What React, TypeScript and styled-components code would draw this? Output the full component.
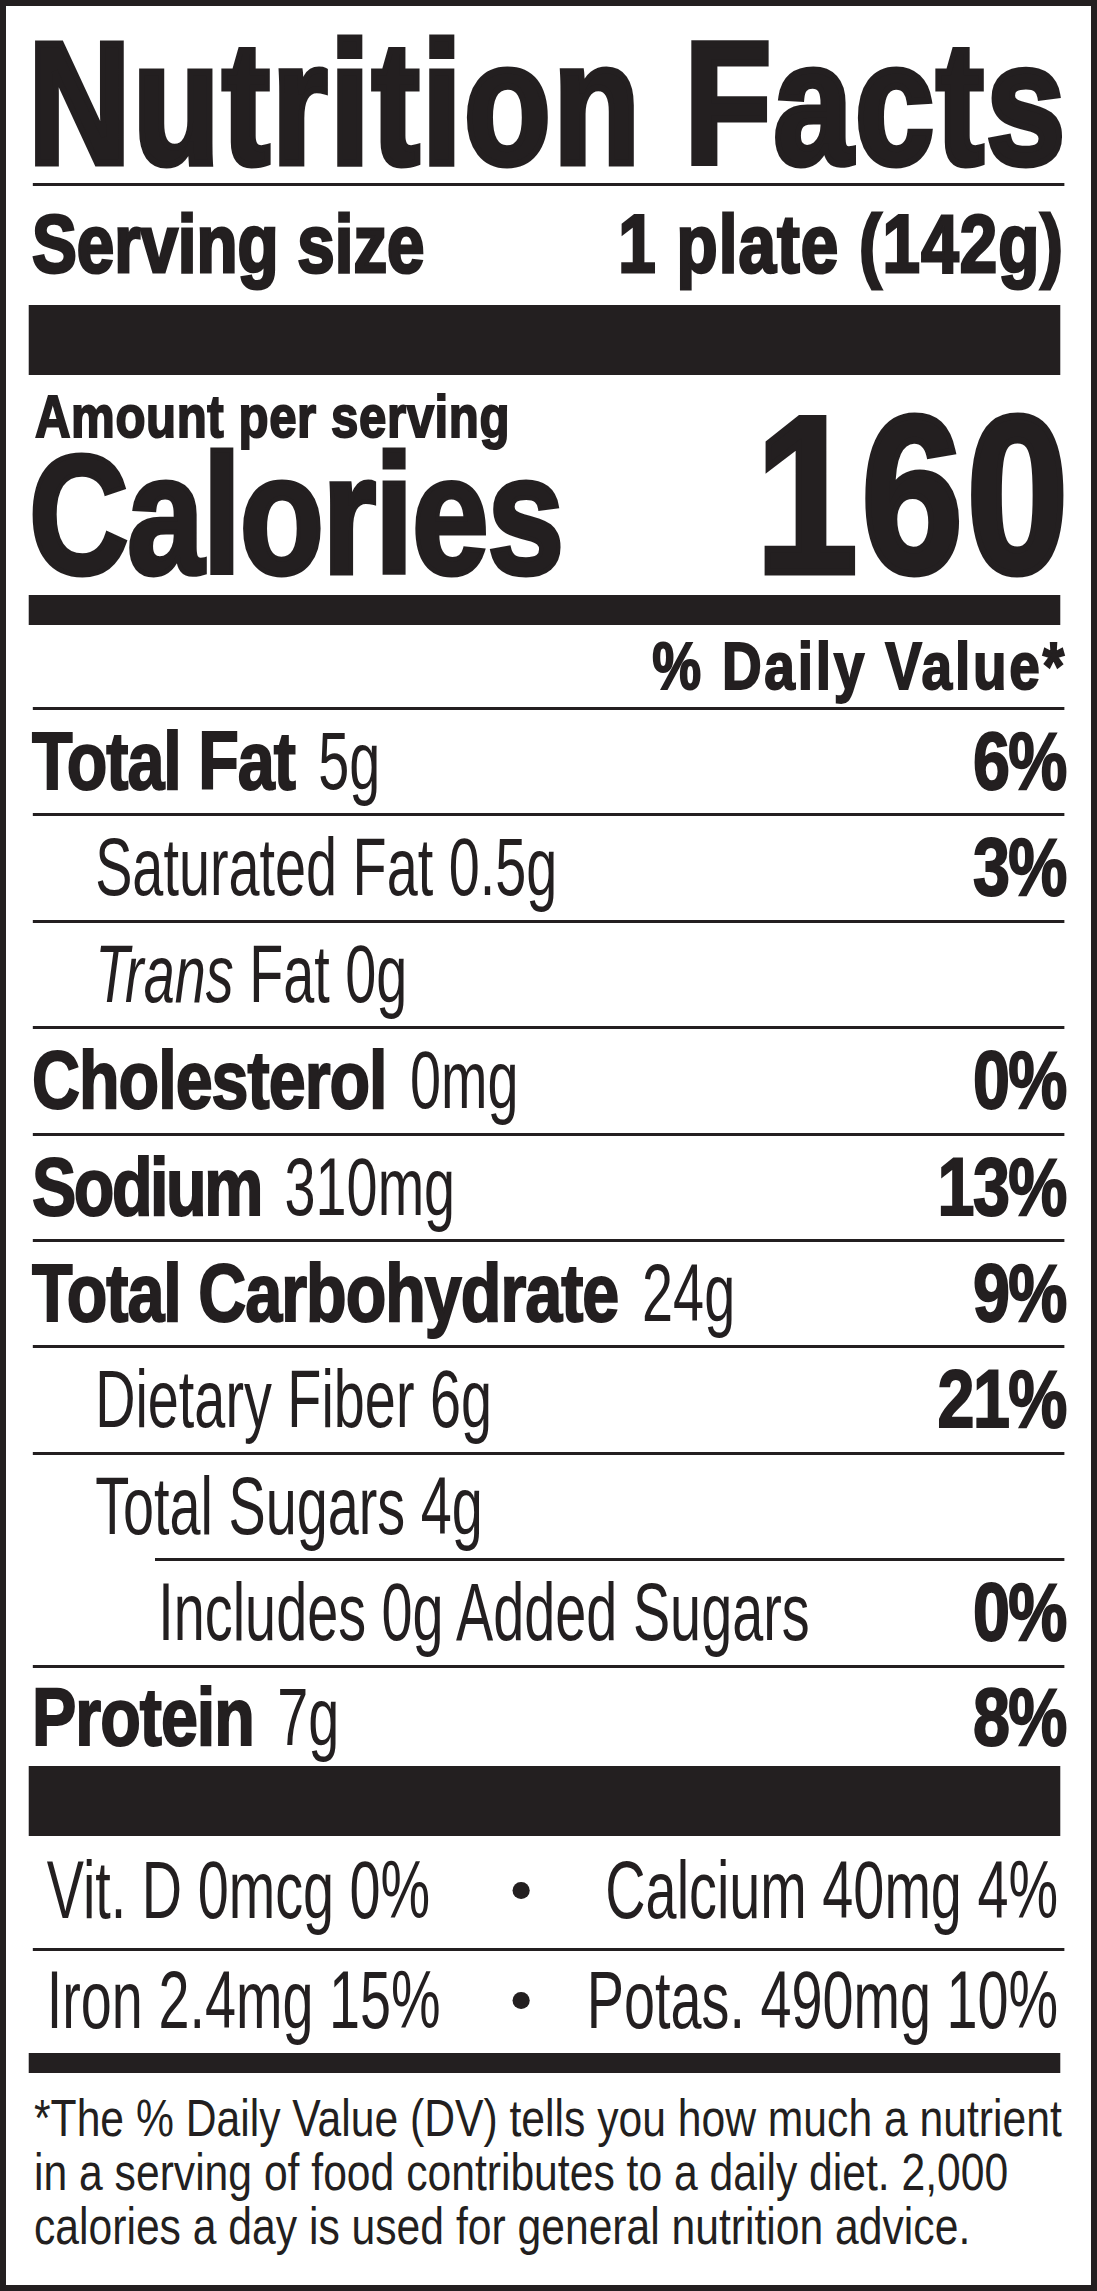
import React from "react";
import styled, { createGlobalStyle, css } from "styled-components";

const INK = "#231f20";
const SQUEEZE = 0.82;
const NARROW = 0.84;
/* convert a visual (on-screen) horizontal distance into panel units */
const sx = (px: number) => `${(px / SQUEEZE).toFixed(2)}px`;

const GlobalStyle = createGlobalStyle`
  html, body { margin: 0; padding: 0; background: #ffffff; }
  body { font-family: "Liberation Sans", Arial, sans-serif; color: ${INK}; }
  * { box-sizing: border-box; }
`;

/* a black-weight grotesque: the bold face, thickened by an outline */
const heavy = (stroke: number) => css`
  font-family: "Liberation Sans", Arial, sans-serif;
  font-weight: 700;
  -webkit-text-stroke: ${stroke}px ${INK};
`;

const regular = css`
  font-family: "Liberation Sans", Arial, sans-serif;
  font-weight: 400;
  -webkit-text-stroke: 0;
`;

const Label = styled.article`
  width: 1097px;
  border: 6px solid ${INK};
  padding-left: 26px;
  overflow: hidden;
  background: #ffffff;
  color: ${INK};
`;

const Panel = styled.div`
  width: ${sx(1032)};
  transform: scaleX(${SQUEEZE});
  transform-origin: left top;
`;

const Title = styled.h1`
  margin: 0 0 0 ${sx(-3.5)};
  padding-top: 18px;
  ${heavy(7)};
  font-size: 172px;
  line-height: 159px;
  letter-spacing: 3.6px;
  white-space: nowrap;
`;

const Rule = styled.div<{ $inset?: number }>`
  height: 3px;
  margin-left: ${(p) => sx(p.$inset ?? 1)};
  background: ${INK};
`;

const Bar = styled.div<{ $h: number }>`
  height: ${(p) => p.$h}px;
  margin: 0 ${sx(4)} 0 ${sx(-3)};
  background: ${INK};
`;

const ServingRow = styled.div`
  display: flex;
  justify-content: space-between;
  align-items: baseline;
  padding-bottom: 4px;
  ${heavy(3)};
  font-size: 82px;
  line-height: 115px;
  white-space: nowrap;
`;

const ServingValue = styled.span`
  letter-spacing: 1.4px;
`;

const CalorieBlock = styled.section`
  display: flex;
  justify-content: space-between;
  align-items: flex-end;
  padding: 4px 0 20px;
  white-space: nowrap;
`;

const CalorieLabels = styled.div`
  display: flex;
  flex-direction: column;
`;

const AmountLine = styled.div`
  margin-left: ${sx(3)};
  ${heavy(2)};
  font-size: 60px;
  line-height: 76px;
  letter-spacing: 0.7px;
`;

const CaloriesLine = styled.div`
  margin-left: ${sx(-3)};
  ${heavy(5)};
  font-size: 168px;
  line-height: 120px;
  letter-spacing: -1.5px;
`;

const CalorieValue = styled.div`
  margin-right: calc(${sx(-4)} - 5px);
  ${heavy(7)};
  font-size: 222px;
  line-height: 160px;
  letter-spacing: 5px;
`;

const DailyHeader = styled.div`
  margin-right: -3.5px;
  ${heavy(2)};
  font-size: 67px;
  line-height: 82px;
  letter-spacing: 3.4px;
  text-align: right;
  white-space: nowrap;
`;

const NutrientRow = styled.div<{ $level: number; $height?: number }>`
  display: flex;
  justify-content: space-between;
  align-items: baseline;
  padding-left: ${(p) => sx([0, 63, 126][p.$level])};
  font-size: 81px;
  line-height: ${(p) => p.$height ?? 103.4}px;
  white-space: nowrap;
`;

const Nutrient = styled.span<{ $tracking?: number }>`
  ${heavy(2)};
  letter-spacing: ${(p) => p.$tracking ?? -1.2}px;
`;

/* the thin condensed face of the label, drawn from the regular face */
const Condensed = styled.span<{ $anchor?: "left" | "right" }>`
  display: inline-block;
  ${regular};
  transform: scaleX(${NARROW});
  transform-origin: ${(p) => (p.$anchor === "right" ? "right" : "left")} center;
`;

const NutrientAmount = styled(Condensed)`
  margin-left: 6px;
`;

const Slanted = styled.em`
  font-style: italic;
`;

const Percent = styled.span`
  ${heavy(2)};
  letter-spacing: -2px;
  margin-right: -2px;
`;

const MicroRow = styled.div<{ $height: number }>`
  display: grid;
  grid-template-columns: ${sx(465.5)} ${sx(17)} minmax(0, 1fr);
  align-items: center;
  padding: 0 ${sx(6)} 4px ${sx(15)};
  font-size: 81px;
  line-height: ${(p) => p.$height}px;
  white-space: nowrap;
`;

const MicroRight = styled(Condensed)`
  justify-self: end;
  margin-left: -240px;
`;

const Dot = styled.span`
  width: ${sx(17)};
  height: 17px;
  border-radius: 50%;
  background: ${INK};
`;

const Footnote = styled.p`
  margin: 0 0 0 ${sx(2)};
  padding: 18px 0 32px;
  ${regular};
  font-size: 52px;
  line-height: 54px;
  letter-spacing: 0px;
  white-space: nowrap;
`;

type NutrientItem = {
  name: string;
  amount: string;
  dv?: string;
  level: 0 | 1 | 2;
  italicPrefix?: string;
  tracking?: number;
};

const nutrients: NutrientItem[] = [
  { name: "Total Fat", amount: "5g", dv: "6%", level: 0 },
  { name: "Saturated Fat", amount: "0.5g", dv: "3%", level: 1 },
  { name: "Fat", italicPrefix: "Trans", amount: "0g", level: 1 },
  { name: "Cholesterol", amount: "0mg", dv: "0%", level: 0 },
  { name: "Sodium", amount: "310mg", dv: "13%", level: 0, tracking: -3 },
  { name: "Total Carbohydrate", amount: "24g", dv: "9%", level: 0 },
  { name: "Dietary Fiber", amount: "6g", dv: "21%", level: 1 },
  { name: "Total Sugars", amount: "4g", level: 1 },
  { name: "Includes 0g Added Sugars", amount: "", dv: "0%", level: 2 },
  { name: "Protein", amount: "7g", dv: "8%", level: 0 },
];

function NutrientLine({ item, height }: { item: NutrientItem; height?: number }) {
  const label =
    item.level === 0 ? (
      <span>
        <Nutrient $tracking={item.tracking}>{item.name}</Nutrient>{" "}
        <NutrientAmount>{item.amount}</NutrientAmount>
      </span>
    ) : (
      <Condensed>
        {item.italicPrefix ? (
          <>
            <Slanted>{item.italicPrefix}</Slanted>{" "}
          </>
        ) : null}
        {item.name}
        {item.amount ? ` ${item.amount}` : ""}
      </Condensed>
    );
  return (
    <NutrientRow $level={item.level} $height={height}>
      {label}
      {item.dv ? <Percent>{item.dv}</Percent> : null}
    </NutrientRow>
  );
}

const micros: [string, string][] = [
  ["Vit. D 0mcg 0%", "Calcium 40mg 4%"],
  ["Iron 2.4mg 15%", "Potas. 490mg 10%"],
];

export default function App() {
  return (
    <>
      <GlobalStyle />
      <Label>
        <Panel>
          <Title>Nutrition Facts</Title>
          <Rule />
          <ServingRow>
            <span>Serving size</span>
            <ServingValue>1 plate (142g)</ServingValue>
          </ServingRow>
          <Bar $h={70} />
          <CalorieBlock>
            <CalorieLabels>
              <AmountLine>Amount per serving</AmountLine>
              <CaloriesLine>Calories</CaloriesLine>
            </CalorieLabels>
            <CalorieValue>160</CalorieValue>
          </CalorieBlock>
          <Bar $h={30} />
          <DailyHeader>% Daily Value*</DailyHeader>
          <Rule />
          {nutrients.map((item, i) => {
            const last = i === nutrients.length - 1;
            return (
              <React.Fragment key={item.name + i}>
                <NutrientLine item={item} height={last ? 98.4 : undefined} />
                {!last && <Rule $inset={item.name === "Total Sugars" ? 123 : 1} />}
              </React.Fragment>
            );
          })}
          <Bar $h={70} />
          {micros.map(([left, right], i) => (
            <React.Fragment key={left}>
              {i > 0 && <Rule />}
              <MicroRow $height={i === 0 ? 108 : 98}>
                <Condensed>{left}</Condensed>
                <Dot aria-hidden="true" />
                <MicroRight $anchor="right">{right}</MicroRight>
              </MicroRow>
            </React.Fragment>
          ))}
          <Bar $h={20} />
          <Footnote>
            *The % Daily Value (DV) tells you how much a nutrient
            <br />
            in a serving of food contributes to a daily diet. 2,000
            <br />
            calories a day is used for general nutrition advice.
          </Footnote>
        </Panel>
      </Label>
    </>
  );
}
